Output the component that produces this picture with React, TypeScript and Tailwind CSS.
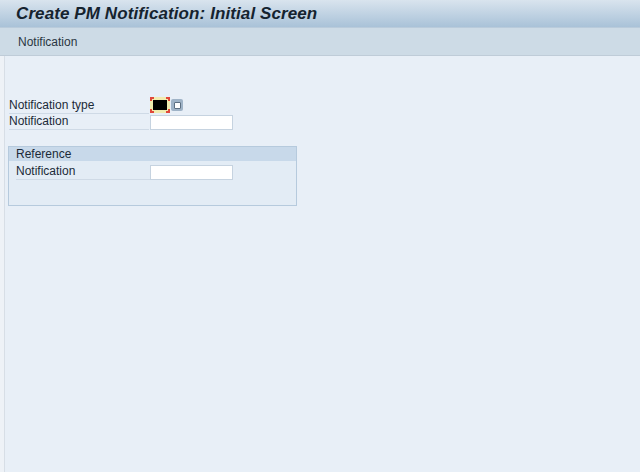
export default function App() {
  return (
    <div className="flex h-[472px] w-[640px] flex-col overflow-hidden bg-[#e8eff7] font-['Liberation_Sans',Arial,sans-serif] text-[#1b2a38]">
      {/* Title bar */}
      <div className="flex h-[28px] shrink-0 items-center border-b border-[#b9cbdb] bg-gradient-to-b from-[#d9e4ee] to-[#a9c2d8] pl-[16px]">
        <span className="text-[17px] font-bold italic tracking-[0.1px] text-[#15232f]">
          Create PM Notification: Initial Screen
        </span>
      </div>
      {/* Toolbar */}
      <div className="flex h-[28px] shrink-0 items-center border-b border-[#bfccd8] bg-[#cddbe6] pl-[18px]">
        <span className="text-[12px] text-[#2a3642]">Notification</span>
      </div>

      <div className="flex flex-1">
        <div className="w-[5px] shrink-0 border-r border-[#d7dee6] bg-[#eef2f7]" />
        <div className="flex flex-col pl-[4px] pt-[40px]">
          {/* Notification type */}
          <div className="flex h-[18px] items-end">
            <div className="w-[140px] border-b border-[#cfdae6] pb-[1px] text-[12px] leading-[14px]">Notification type</div>
            <div className="relative ml-[1px] flex h-[18px] items-center">
              <div className="relative h-[16px] w-[20px] bg-[#f1ecb0]">
                <div className="absolute left-[3px] top-[3px] h-[10px] w-[14px] bg-black" />
                <span className="absolute left-0 top-0 h-[4px] w-[4px] border-l-2 border-t-2 border-[#e0483a]" />
                <span className="absolute right-0 top-0 h-[4px] w-[4px] border-r-2 border-t-2 border-[#e0483a]" />
                <span className="absolute bottom-0 left-0 h-[4px] w-[4px] border-b-2 border-l-2 border-[#e0483a]" />
                <span className="absolute bottom-0 right-0 h-[4px] w-[4px] border-b-2 border-r-2 border-[#e0483a]" />
              </div>
              <div className="ml-[1px] flex h-[12px] w-[12px] items-center justify-center rounded-[2px] bg-[#9fb3c7]">
                <div className="h-[7px] w-[7px] rounded-[1px] border border-[#5c6f82] bg-white" />
              </div>
            </div>
          </div>
          {/* Notification */}
          <div className="flex h-[16px] items-end">
            <div className="w-[140px] border-b border-[#cfdae6] pb-[1px] text-[12px] leading-[14px]">Notification</div>
            <div className="ml-[1px] h-[15px] w-[83px] border border-[#c6d3e0] bg-white" />
          </div>

          {/* Reference group */}
          <div className="mt-[16px] ml-[-1px] flex h-[60px] w-[289px] flex-col border border-[#b6cadd] bg-[#e3ecf5]">
            <div className="flex h-[14px] items-center bg-[#c8d9ea] pl-[7px] text-[12px]">Reference</div>
            <div className="mt-[3px] flex h-[16px] items-end pl-[7px]">
              <div className="w-[134px] border-b border-[#cfdae6] pb-[1px] text-[12px] leading-[14px]">Notification</div>
              <div className="h-[15px] w-[83px] border border-[#c6d3e0] bg-white" />
            </div>
          </div>
        </div>
      </div>
    </div>
  );
}
